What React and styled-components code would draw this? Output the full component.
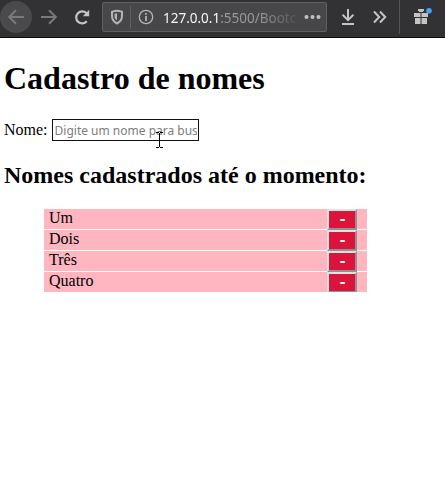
import React from "react";
import styled, { createGlobalStyle } from "styled-components";

const GlobalStyle = createGlobalStyle`
  * { box-sizing: border-box; }
  html, body { margin: 0; background: #fff; overflow: hidden; }
  body { font: 16px/18px "Liberation Serif", "Times New Roman", serif; color: #000; }
`;

const Toolbar = styled.header`
  display: flex;
  height: 38px;
  background: #323234;
  border-bottom: 1px solid #0c0c0d;
`;

const ToolButton = styled.button`
  flex: none;
  display: grid;
  place-items: center;
  width: 32px;
  height: 32px;
  margin: 1px 0 0 ${(p) => p.$gap || 0}px;
  padding: 0;
  border: 0;
  border-radius: 50%;
  background: ${(p) => (p.$round ? "#4a4a4c" : "transparent")};
  color: ${(p) => (p.$dim ? "#7b7977" : "#c6c4c3")};
  svg { display: block; }
`;

const AddressBar = styled.div`
  flex: none;
  display: flex;
  align-items: center;
  width: 225px;
  height: 30px;
  margin: 2px 0 0 4px;
  padding: 0 5px 0 7px;
  border: 1px solid #606062;
  border-radius: 2px;
  background: #474749;
  color: #b5b3b5;
  svg { flex: none; display: block; }
`;

const AddressDivider = styled.span`
  width: 1px;
  height: 22px;
  margin: 0 7px 0 6px;
  background: #626264;
`;

const Address = styled.div`
  flex: 1;
  margin-left: 9px;
  padding-top: 2px;
  white-space: nowrap;
  font: 13.5px/22px "Noto Sans", sans-serif;
  color: #9a989a;
  mask-image: linear-gradient(to right, #000 95px, transparent 140px);
`;

const Host = styled.span`
  color: #f5f5f5;
`;

const ToolDivider = styled.span`
  width: 1px;
  height: 34px;
  margin-left: 3px;
  background: #555557;
`;

const Page = styled.main`
  padding: 0 4px;
`;

const Title = styled.h1`
  margin: 0;
  padding-top: 22px;
  font-size: 32px;
  line-height: 37px;
`;

const Field = styled.label`
  display: flex;
  align-items: center;
  width: max-content;
  margin-top: 22px;
`;

const SearchInput = styled.input`
  width: 147px;
  height: 22px;
  margin: 0 0 0 4px;
  padding: 0 1px 0 2px;
  border: 1px solid #111;
  border-radius: 0;
  outline: 0;
  background: #fff;
  font: 12px/18px "Noto Sans", sans-serif;
  &::placeholder { color: #7d7d7d; opacity: 1; }
`;

const Subtitle = styled.h2`
  margin: 20px 0 0;
  font-size: 24px;
  line-height: 28px;
`;

const NameList = styled.ul`
  display: grid;
  gap: 1px;
  width: 323px;
  margin: 20px 0 0 40px;
  padding: 0;
  list-style: none;
`;

const NameRow = styled.li`
  display: flex;
  justify-content: space-between;
  align-items: flex-start;
  height: 20px;
  padding: 0 10px 0 5px;
  background: #ffb6c1;
`;

const RemoveButton = styled.button`
  display: grid;
  justify-items: center;
  align-items: start;
  width: 30px;
  height: 21px;
  padding: 0 0 0 1px;
  border: 2px solid;
  border-color: #e3e3e3 #929292 #929292 #e3e3e3;
  background: #dc143c;
  color: #fff;
`;

const Minus = styled.span`
  font: bold 17px/15px "Liberation Sans", Arial, sans-serif;
`;

const TextCursor = styled.svg`
  position: absolute;
  left: 155px;
  top: 132px;
`;

const Stroke = ({ size = 16, width = 2, children }) => (
  <svg width={size} height={size} viewBox="0 0 16 16" fill="none" stroke="currentColor" strokeWidth={width}>
    {children}
  </svg>
);

const names = ["Um", "Dois", "Três", "Quatro"];

export default function App() {
  return (
    <>
      <GlobalStyle />
      <Toolbar>
        <ToolButton $round $dim aria-label="Voltar">
          <Stroke><path d="M16 8H1.5M8 1.2 1.2 8 8 14.8" /></Stroke>
        </ToolButton>
        <ToolButton $dim $gap={1} aria-label="Avançar">
          <Stroke><path d="M0 8h14.5M8 1.2 14.8 8 8 14.8" /></Stroke>
        </ToolButton>
        <ToolButton $gap={1} aria-label="Recarregar">
          <Stroke>
            <path d="M12.8 12.2A6 6 0 1 1 12.5 4.2" strokeWidth="2.2" />
            <path d="M15.2.8v6.4H8.8Z" fill="currentColor" stroke="none" />
          </Stroke>
        </ToolButton>
        <AddressBar>
          <svg width="14" height="16" viewBox="0 0 14 16" fill="none">
            <path d="M7 1.8c2 0 3.6.5 5 .9v4.1c0 3.5-1.9 6.2-5 7.7-3.1-1.500-5-4.200-5-7.700V2.700c1.400-.4 3-.9 5-.9Z" stroke="currentColor" strokeWidth="2" />
            <path d="M7 4.300v7.200C5.200 10.300 4.500 8.700 4.500 6.700V4.700Z" fill="currentColor" />
          </svg>
          <AddressDivider />
          <Stroke width={1.3}>
            <circle cx="8" cy="8" r="6.7" />
            <path d="M8 7v5M8 4v1.7" strokeWidth="1.8" />
          </Stroke>
          <Address><Host>127.0.0.1</Host>:5500/Bootc</Address>
          <svg width="17" height="6" viewBox="0 0 17 6" fill="#c5bfc4">
            <circle cx="2.5" cy="3" r="2" />
            <circle cx="8.5" cy="3" r="2" />
            <circle cx="14.5" cy="3" r="2" />
          </svg>
        </AddressBar>
        <ToolButton $gap={5} aria-label="Downloads">
          <Stroke><path d="M8 0v11M2.6 5.8 8 11.2l5.4-5.4M2 15h12" /></Stroke>
        </ToolButton>
        <ToolButton aria-label="Mais ferramentas">
          <Stroke><path d="m2 2.500 5.200 5.500L2 13.500m6-11 5.200 5.500L8 13.500" /></Stroke>
        </ToolButton>
        <ToolDivider />
        <ToolButton $gap={6} aria-label="Novidades">
          <svg width="20" height="18" viewBox="0 0 20 18" fill="#c6c4c3">
            <path d="M2 5h6.500v4H2zM9.500 5H16v4H9.500zM3 10h5.500v6H3zM9.500 10H15v6H9.500z" />
            <path d="M6 1h6v1.500L10.500 4h-3L6 2.500z" />
            <circle cx="17" cy="2.800" r="2.800" fill="#45a1ff" />
          </svg>
        </ToolButton>
      </Toolbar>
      <Page>
        <Title>Cadastro de nomes</Title>
        <Field>
          Nome:
          <SearchInput placeholder="Digite um nome para buscar" />
        </Field>
        <Subtitle>Nomes cadastrados até o momento:</Subtitle>
        <NameList>
          {names.map((name) => (
            <NameRow key={name}>
              {name}
              <RemoveButton aria-label={`Remover ${name}`}><Minus>-</Minus></RemoveButton>
            </NameRow>
          ))}
        </NameList>
      </Page>
      <TextCursor width="9" height="17" viewBox="0 0 9 17" fill="none" stroke="#000" shapeRendering="crispEdges">
        <path d="M1 .5h3M5 .5h3M4.500 1v14M1 15.500h3M5 15.500h3" />
      </TextCursor>
    </>
  );
}
